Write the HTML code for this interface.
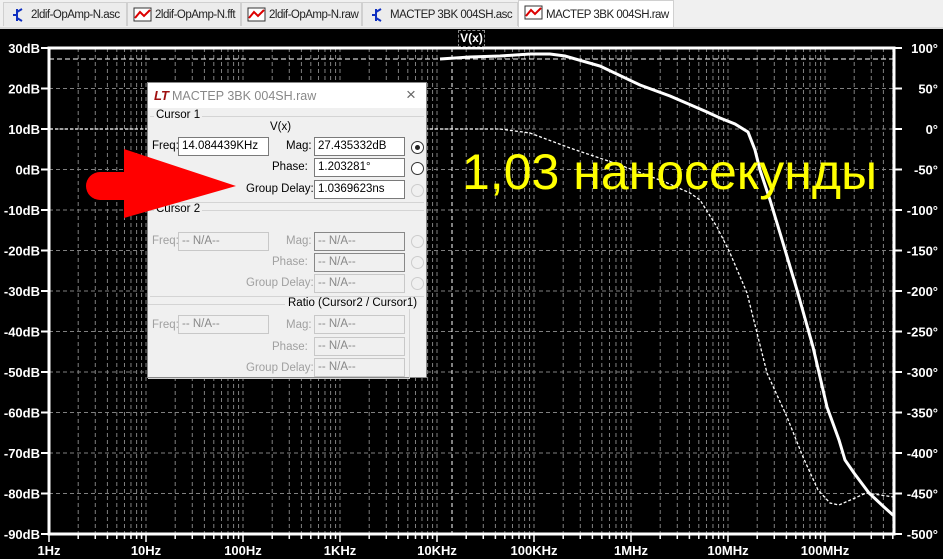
<!DOCTYPE html>
<html><head><meta charset="utf-8"><style>
body{margin:0;width:943px;height:559px;overflow:hidden;background:#000;font-family:"Liberation Sans",sans-serif;position:relative}
#tabs{position:absolute;left:0;top:0;width:943px;height:27px;background:#f0f0f0;border-bottom:2px solid #d8d8d8}
.tab{position:absolute;top:2px;height:24px;border:1px solid #d0d0d0;border-bottom:none;background:#ececec;font-size:11.5px;color:#222;line-height:24px;box-sizing:border-box;padding-left:27px;white-space:nowrap;overflow:hidden;letter-spacing:-0.5px}
.tab.act{background:#fff;top:0;height:27px;line-height:28px}
.tab svg{position:absolute;left:5px;top:4px}
#dlg{position:absolute;left:147px;top:82px;width:280px;height:296px;background:#f0f0f0;border:1px solid #888;box-sizing:border-box;font-size:11.5px;color:#000}
.t{position:absolute;white-space:nowrap}
.box{position:absolute;height:19px;border:1px solid #7a7a7a;background:#fff;box-sizing:border-box;line-height:17px;padding-left:3px;font-size:11.5px}
.dis{background:#f0f0f0;border-color:#c8c8c8;color:#888}
.g{color:#a0a0a0}
.rad{position:absolute;width:11px;height:11px;border-radius:50%;border:1px solid #333;background:#fff}
.rad.d{border-color:#ccc;background:#f0f0f0}
.sep{position:absolute;height:1px;background:#d4d4d4;left:2px;right:2px}
</style></head><body>
<div id="tabs">
<div class="tab" style="left:3px;width:124px"><svg width="18" height="16"><path d="M8 2v12M4 8h4M8 5l5-3M8 11l5 3" stroke="#1030c0" stroke-width="2" fill="none"/></svg>2ldif-OpAmp-N.asc</div>
<div class="tab" style="left:127px;width:114px"><svg width="20" height="16"><rect x="1" y="1" width="17" height="13" fill="#fff" stroke="#333"/><path d="M2 11l5-6 4 4 6-6" stroke="#d00" stroke-width="2" fill="none"/></svg>2ldif-OpAmp-N.fft</div>
<div class="tab" style="left:241px;width:121px"><svg width="20" height="16"><rect x="1" y="1" width="17" height="13" fill="#fff" stroke="#333"/><path d="M2 11l5-6 4 4 6-6" stroke="#d00" stroke-width="2" fill="none"/></svg>2ldif-OpAmp-N.raw</div>
<div class="tab" style="left:362px;width:156px;"><svg width="18" height="16"><path d="M8 2v12M4 8h4M8 5l5-3M8 11l5 3" stroke="#1030c0" stroke-width="2" fill="none"/></svg>MACTEP 3BK 004SH.asc</div>
<div class="tab act" style="left:518px;width:156px;"><svg width="20" height="16"><rect x="1" y="1" width="17" height="13" fill="#fff" stroke="#333"/><path d="M2 11l5-6 4 4 6-6" stroke="#d00" stroke-width="2" fill="none"/></svg>MACTEP 3BK 004SH.raw</div>
</div>
<svg id="plot" width="943" height="559" style="position:absolute;left:0;top:0" font-family="Liberation Sans, sans-serif" font-weight="bold"></svg>
<div class="t" style="left:458px;top:30px;width:25px;height:15px;border:1px dashed #888;color:#fff;font-size:12px;font-weight:bold;text-align:center;line-height:15px;background:#000">V(x)</div>
<div id="dlg">
<div style="position:absolute;left:0;top:0;right:0;height:25px;background:#fff"></div>
<div class="t" style="left:6px;top:5px;color:#a01010;font-weight:bold;font-style:italic;font-size:13px">LT</div>
<div class="t" style="left:24px;top:6px;color:#888;font-size:12.5px">MACTEP 3BK 004SH.raw</div>
<div class="t" style="left:258px;top:2px;color:#666;font-size:17px">×</div>
<div class="sep" style="top:33px"></div>
<div class="t" style="left:6px;top:26px;background:#f0f0f0;padding:0 2px">Cursor 1</div>
<div class="t" style="left:122px;top:38px">V(x)</div>
<div class="t" style="left:4px;top:57px">Freq:</div><div class="box" style="left:30px;top:54px;width:91px">14.084439KHz</div>
<div class="t" style="left:138px;top:57px">Mag:</div><div class="box" style="left:166px;top:54px;width:91px">27.435332dB</div>
<div class="rad" style="left:263px;top:58px"><div style="width:5px;height:5px;border-radius:50%;background:#222;margin:3px"></div></div>
<div class="t" style="left:124px;top:78px">Phase:</div><div class="box" style="left:166px;top:75px;width:91px">1.203281°</div>
<div class="rad" style="left:263px;top:79px"></div>
<div class="t" style="left:98px;top:100px">Group Delay:</div><div class="box" style="left:166px;top:97px;width:91px">1.0369623ns</div>
<div class="rad d" style="left:263px;top:101px"></div>
<div class="sep" style="top:119px"></div>
<div class="sep" style="top:127px"></div>
<div class="t" style="left:6px;top:120px;background:#f0f0f0;padding:0 2px">Cursor 2</div>
<div class="t g" style="left:4px;top:152px">Freq:</div><div class="box dis" style="left:30px;top:149px;width:91px">-- N/A--</div>
<div class="t g" style="left:138px;top:152px">Mag:</div><div class="box dis" style="left:166px;top:149px;width:91px;border-color:#888">-- N/A--</div>
<div class="rad d" style="left:263px;top:152px"></div>
<div class="t g" style="left:124px;top:173px">Phase:</div><div class="box dis" style="left:166px;top:170px;width:91px;border-color:#888">-- N/A--</div>
<div class="rad d" style="left:263px;top:173px"></div>
<div class="t g" style="left:98px;top:194px">Group Delay:</div><div class="box dis" style="left:166px;top:191px;width:91px">-- N/A--</div>
<div class="rad d" style="left:263px;top:194px"></div>
<div class="sep" style="top:213px"></div>
<div style="position:absolute;left:0;top:221px;width:261px;height:73px;border:1px solid #d4d4d4;border-left:none"></div>
<div class="t" style="left:137px;top:214px;background:#f0f0f0;padding:0 3px">Ratio (Cursor2 / Cursor1)</div>
<div class="t g" style="left:4px;top:236px">Freq:</div><div class="box dis" style="left:30px;top:232px;width:91px">-- N/A--</div>
<div class="t g" style="left:138px;top:236px">Mag:</div><div class="box dis" style="left:166px;top:232px;width:91px">-- N/A--</div>
<div class="t g" style="left:124px;top:258px">Phase:</div><div class="box dis" style="left:166px;top:254px;width:91px">-- N/A--</div>
<div class="t g" style="left:98px;top:279px">Group Delay:</div><div class="box dis" style="left:166px;top:275px;width:91px">-- N/A--</div>
</div>
<svg width="943" height="559" style="position:absolute;left:0;top:0">
<path d="M100 172 H124 V149 L236 186 L124 218 V200 H100 A14 14 0 0 1 100 172Z" fill="#ff0000"/>
</svg>
<div class="t" style="left:462px;top:143px;color:#ffff00;font-size:50px;font-family:'Liberation Sans',sans-serif">1,03 наносекунды</div>
<script>
var s=document.getElementById('plot'),h='';
var L=49,R=894,T=48,B=534,dy=(B-T)/12,dec=97;
function X(f){return L+Math.log10(f)*dec}
for(var i=1;i<12;i++){var y=T+i*dy;h+='<line x1="'+L+'" x2="'+R+'" y1="'+y+'" y2="'+y+'" stroke="#808080" stroke-dasharray="4,3"/>';}
for(var d=0;d<9;d++)for(var m=1;m<10;m++){var x=X(m*Math.pow(10,d));if(x>L+1&&x<R-1){h+='<line x1="'+x+'" x2="'+x+'" y1="'+T+'" y2="'+B+'" stroke="#808080" stroke-dasharray="4,3"/>';}
 if(x<R)h+='<line x1="'+x+'" x2="'+x+'" y1="'+B+'" y2="'+(B+(m==1?8:5))+'" stroke="#fff" stroke-width="1.5"/>';}
h+='<rect x="'+L+'" y="'+T+'" width="'+(R-L)+'" height="'+(B-T)+'" fill="none" stroke="#fff" stroke-width="3"/>';
var lab=['30dB','20dB','10dB','0dB','-10dB','-20dB','-30dB','-40dB','-50dB','-60dB','-70dB','-80dB','-90dB'];
var rl=['100°','50°','0°','-50°','-100°','-150°','-200°','-250°','-300°','-350°','-400°','-450°','-500°'];
for(var i=0;i<13;i++){var y=T+i*dy;h+='<line x1="'+(L-8)+'" x2="'+L+'" y1="'+y+'" y2="'+y+'" stroke="#fff" stroke-width="2"/><line x1="'+R+'" x2="'+(R+8)+'" y1="'+y+'" y2="'+y+'" stroke="#fff" stroke-width="2"/>';
h+='<text x="'+(L-9)+'" y="'+(y+5)+'" fill="#fff" font-size="13" text-anchor="end">'+lab[i]+'</text><text x="'+(R+44)+'" y="'+(y+5)+'" fill="#fff" font-size="13" text-anchor="end">'+rl[i]+'</text>';}
var fl=['1Hz','10Hz','100Hz','1KHz','10KHz','100KHz','1MHz','10MHz','100MHz'];
for(var d=0;d<9;d++)h+='<text x="'+X(Math.pow(10,d))+'" y="'+(B+21)+'" fill="#fff" font-size="13" text-anchor="middle">'+fl[d]+'</text>';
h+='<line x1="452" x2="452" y1="'+T+'" y2="'+B+'" stroke="#fff" stroke-dasharray="4,3"/>';
h+='<line x1="'+L+'" x2="'+R+'" y1="59" y2="59" stroke="#fff" stroke-dasharray="5,3"/>';
h+='<polyline fill="none" stroke="#fff" stroke-width="1.3" stroke-dasharray="3,2" points="50,129 500,129 530,133 570,148 620,165 665,182 690,193 700,200 717,227 730,253 747,293 757,333 767,373 787,417 803,457 818,490 830,503 839,505 855,498 866,493 880,495 894,497"/>';
h+='<polyline fill="none" stroke="#fff" stroke-width="3" points="440,59 470,57 500,56 530,54 550,54 565,56 600,66 640,85 670,96 707,112 720,118 735,124 748,132 755,150 760,170 770,200 780,233 797,290 813,347 827,407 839,440 845,460 854,473 869,493 884,507 894,516"/>';
s.innerHTML=h;
</script>
</body></html>
